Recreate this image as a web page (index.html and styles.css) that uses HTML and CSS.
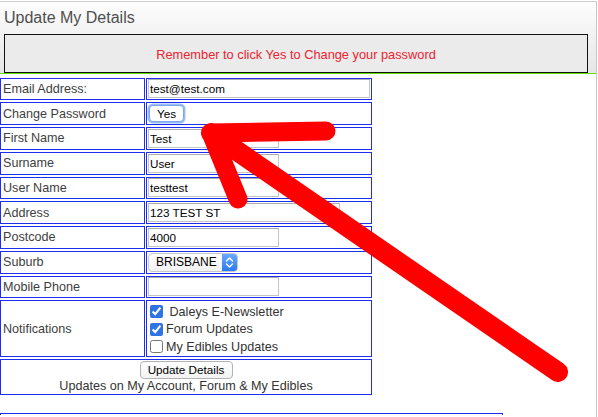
FILE: index.html
```html
<!DOCTYPE html>
<html>
<head>
<meta charset="utf-8">
<link rel="stylesheet" href="styles.css">
</head>
<body>
<div class="panel">
  <div class="panel-head">
    <h1 class="title">Update My Details</h1>
    <div class="notice">Remember to click Yes to Change your password</div>
  </div>
  <div class="panel-body">
    <div class="form-grid">
      <div class="lbl">Email Address:</div>
      <div class="fld"><input class="txt w-email" value="test@test.com"></div>

      <div class="lbl">Change Password</div>
      <div class="fld"><button class="yes-btn">Yes</button></div>

      <div class="lbl">First Name</div>
      <div class="fld"><input class="txt w-short" value="Test"></div>

      <div class="lbl">Surname</div>
      <div class="fld"><input class="txt w-short" value="User"></div>

      <div class="lbl">User Name</div>
      <div class="fld"><input class="txt w-short" value="testtest"></div>

      <div class="lbl">Address</div>
      <div class="fld"><input class="txt w-addr" value="123 TEST ST"></div>

      <div class="lbl">Postcode</div>
      <div class="fld"><input class="txt w-short" value="4000"></div>

      <div class="lbl">Suburb</div>
      <div class="fld">
        <span class="select">
          <select class="select-native"><option>BRISBANE</option></select>
          <span class="select-arrows">
            <svg width="9" height="13" viewBox="0 0 9 13"><path d="M1.5 5 L4.5 2 L7.5 5 M1.5 8 L4.5 11 L7.5 8" fill="none" stroke="#fff" stroke-width="1.4" stroke-linecap="round" stroke-linejoin="round"/></svg>
          </span>
        </span>
      </div>

      <div class="lbl">Mobile Phone</div>
      <div class="fld"><input class="txt w-short" value=""></div>

      <div class="lbl">Notifications</div>
      <div class="fld checks">
        <label class="check"><input type="checkbox" checked> Daleys E-Newsletter</label>
        <label class="check"><input type="checkbox" checked>Forum Updates</label>
        <label class="check"><input type="checkbox">My Edibles Updates</label>
      </div>

      <div class="submit-row">
        <button class="update-btn">Update Details</button>
        <div class="submit-note">Updates on My Account, Forum &amp; My Edibles</div>
      </div>
    </div>
    <div class="next-box"></div>
  </div>
</div>
<svg class="arrow" width="598" height="417" viewBox="0 0 598 417">
  <path d="M326 131 L211 133 L238 199" fill="none" stroke="#ff0000" stroke-width="19" stroke-linecap="round" stroke-linejoin="round"/>
  <path d="M211 133 L558 372" fill="none" stroke="#ff0000" stroke-width="20" stroke-linecap="round"/>
</svg>
</body>
</html>
```

FILE: styles.css
```css
html, body {
  margin: 0;
  padding: 0;
  background: #fff;
}
body {
  font-family: "Liberation Sans", Arial, Helvetica, sans-serif;
  width: 598px;
  height: 417px;
  overflow: hidden;
  position: relative;
}
.panel {
  margin-top: 1px;
  width: 597px;
  height: 416px;
  box-sizing: border-box;
  border-top: 1px solid #cfcfcf;
  border-right: 1px solid #c6c6c6;
  overflow: hidden;
}
.panel-head {
  background: linear-gradient(#fdfdfd, #e6e6e6);
  border-bottom: 1px solid #5fe000;
  padding: 7px 8px 0 4px;
}
.title {
  margin: 0;
  font-size: 16px;
  font-weight: normal;
  color: #4e4e4e;
  line-height: 18px;
}
.notice {
  margin-top: 7px;
  height: 39px;
  box-sizing: border-box;
  border: 1px solid #111;
  background: #ebebeb;
  color: #ec2431;
  font-size: 12.8px;
  display: flex;
  align-items: center;
  justify-content: center;
  padding-top: 1px;
}
.panel-body {
  padding-top: 3.5px;
}
.form-grid {
  display: grid;
  grid-template-columns: 145px 226px;
  grid-template-rows: repeat(9, 22.75px) 57px 36px;
  column-gap: 1px;
  row-gap: 2px;
}
.lbl, .fld, .submit-row {
  border: 1px solid #1d2ef0;
  box-sizing: border-box;
}
.lbl {
  display: flex;
  align-items: center;
  padding-left: 2px;
  font-size: 12.6px;
  color: #3e3e3e;
}
.fld {
  display: flex;
  align-items: center;
  padding-left: 1px;
}
.txt {
  height: 19px;
  box-sizing: border-box;
  border: 1px solid #c4c4c4;
  border-top-color: #adadad;
  padding: 0 1px;
  margin: 0;
  font-family: "Liberation Sans", Arial, sans-serif;
  font-size: 11.7px;
  color: #000;
  background: #fff;
  outline: none;
}
.w-email { width: 222px; }
.w-short { width: 131px; }
.w-addr { width: 192px; }
.yes-btn {
  margin: 0 0 0 1px;
  width: 35px;
  height: 17px;
  padding: 0;
  border: 1px solid #7aa7ef;
  border-radius: 4px;
  box-shadow: 0 0 0 1.5px rgba(110, 160, 240, 0.7);
  background: #fff;
  font-family: "Liberation Sans", Arial, sans-serif;
  font-size: 11.7px;
  color: #000;
  line-height: 15px;
}
.select {
  display: inline-flex;
  align-items: stretch;
  width: 90px;
  height: 19px;
  box-sizing: border-box;
  border: 1px solid #c8c8c8;
  border-radius: 4px;
  background: linear-gradient(#ffffff, #f1f1f1);
  overflow: hidden;
}
.select-native {
  appearance: none;
  -webkit-appearance: none;
  border: none;
  background: transparent;
  margin: 0;
  padding: 0 0 0 7px;
  flex: 1;
  min-width: 0;
  font-family: "Liberation Sans", Arial, sans-serif;
  font-size: 12px;
  color: #000;
  outline: none;
}
.select-arrows {
  width: 15px;
  display: flex;
  align-items: center;
  justify-content: center;
  background: linear-gradient(#6aa9ff, #2a7af2);
}
.checks {
  flex-direction: column;
  align-items: flex-start;
  justify-content: center;
  padding-left: 0;
  padding-top: 1px;
}
.check {
  display: flex;
  align-items: center;
  height: 17.4px;
  font-size: 12.6px;
  color: #333;
  white-space: pre;
}
.check input {
  width: 13px;
  height: 13px;
  margin: 0 3px 0 3px;
  accent-color: #2f74e6;
}
.submit-row {
  grid-column: 1 / -1;
  display: flex;
  flex-direction: column;
  align-items: center;
  padding-top: 1px;
}
.update-btn {
  height: 18px;
  width: 93px;
  padding: 0;
  border: 1px solid #b3b3b3;
  border-radius: 4px;
  background: linear-gradient(#ffffff, #f2f2f2);
  font-family: "Liberation Sans", Arial, sans-serif;
  font-size: 11.7px;
  color: #000;
  line-height: 16px;
}
.submit-note {
  font-size: 12.6px;
  color: #333;
  line-height: 15px;
  margin-top: 0;
}
.next-box {
  margin-top: 18px;
  width: 503px;
  height: 2px;
  box-sizing: border-box;
  border-top: 1px solid #1d2ef0;
  border-left: 1px solid #1d2ef0;
  border-right: 1px solid #1d2ef0;
}
.arrow {
  position: absolute;
  top: 0;
  left: 0;
  pointer-events: none;
}
```
